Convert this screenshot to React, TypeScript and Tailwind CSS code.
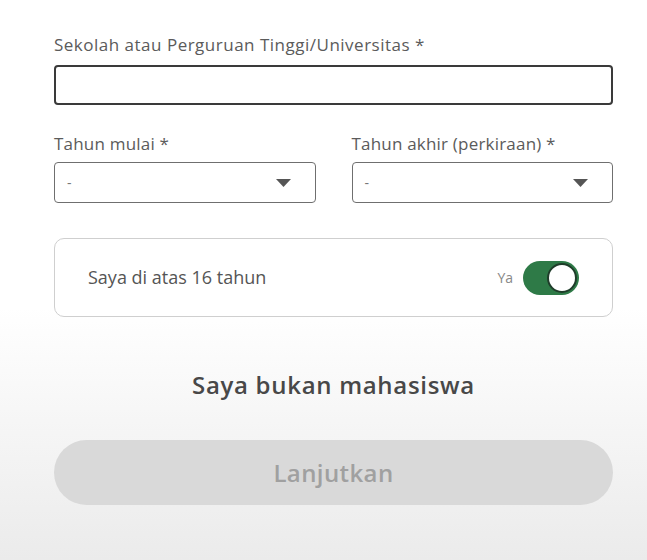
const Select = ({ label }: { label: string }) => (
  <div className="flex flex-col">
    <label className="text-[17px] text-[#5b5b5b] leading-5 mb-[8px] tracking-[0.2px]">{label}</label>
    <div className="h-[41px] rounded-[4px] border border-[#6f6f6f] bg-white flex items-center justify-between pl-3 pr-[24px]">
      <span className="text-[#777] text-[14px]">-</span>
      <svg width="15" height="8" viewBox="0 0 15 8">
        <path d="M0 0 H15 L7.5 8 Z" fill="#555" />
      </svg>
    </div>
  </div>
);

const App = () => {
  return (
    <div
      className="min-h-[560px] w-[647px] bg-gradient-to-b from-white from-55% to-[#ebebeb] flex flex-col pt-[35px] pl-[54px] pr-[34px]"
      style={{ fontFamily: '"Open Sans", "Noto Sans", sans-serif' }}
    >
      <label className="text-[17px] text-[#5b5b5b] leading-5 mb-[10px] tracking-[0.5px]">
        Sekolah atau Perguruan Tinggi/Universitas *
      </label>
      <div className="h-[40px] w-[559px] rounded-[4px] border-2 border-[#3a3a3a] bg-white" />

      <div className="grid grid-cols-2 gap-x-[36px] mt-[29px] w-[559px]">
        <Select label="Tahun mulai *" />
        <Select label="Tahun akhir (perkiraan) *" />
      </div>

      <div className="mt-[35px] w-[559px] h-[79px] rounded-[10px] border border-[#cfcfcf] bg-white flex items-center justify-between pl-[33px] pr-[33px]">
        <span className="text-[18px] text-[#555]">Saya di atas 16 tahun</span>
        <div className="flex items-center gap-[10px]">
          <span className="text-[14px] text-[#888]">Ya</span>
          <div className="w-[56px] h-[34px] rounded-full bg-[#2e7a47] flex items-center justify-end pr-[2px]">
            <div className="w-[30px] h-[30px] rounded-full bg-white border-2 border-[#1f3d2a]" />
          </div>
        </div>
      </div>

      <div className="mt-[52px] text-center text-[24px] font-semibold text-[#484848] tracking-[0.7px] leading-8">
        Saya bukan mahasiswa
      </div>

      <button className="mt-[39px] w-[559px] h-[65px] rounded-full bg-[#d9d9d9] text-[24px] font-semibold text-[#a0a0a0] tracking-[0.4px]">
        Lanjutkan
      </button>
    </div>
  );
};

export default App;
